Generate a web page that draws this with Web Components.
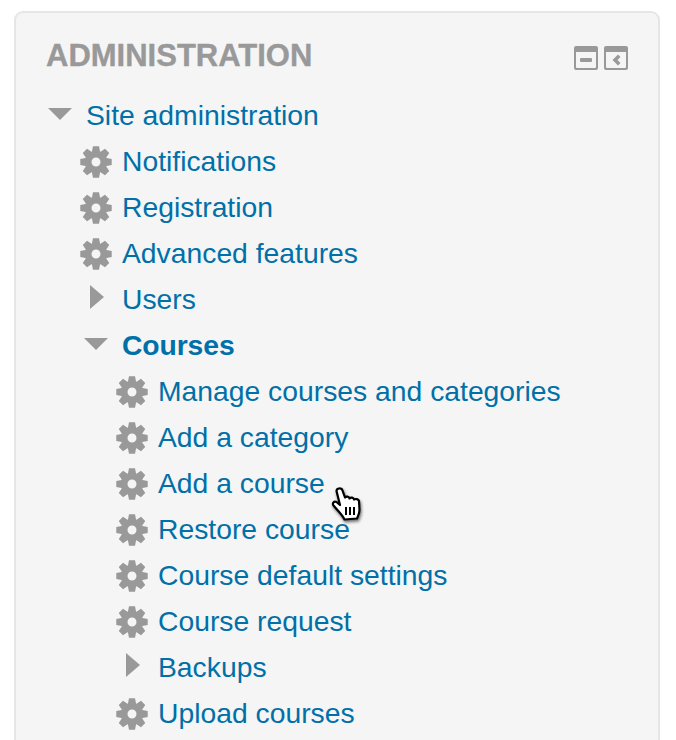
<!DOCTYPE html>
<html>
<head>
<meta charset="utf-8">
<style>
html,body{margin:0;padding:0;background:#fff;height:740px;overflow:hidden}
body{font-family:"Liberation Sans",Arial,sans-serif;position:relative}
</style>
</head>
<body>
<x-page>
  <x-block heading="ADMINISTRATION">
    <x-node kind="open" label="Site administration">
      <x-node kind="gear" label="Notifications"></x-node>
      <x-node kind="gear" label="Registration"></x-node>
      <x-node kind="gear" label="Advanced features"></x-node>
      <x-node kind="closed" label="Users"></x-node>
      <x-node kind="open" label="Courses" bold>
        <x-node kind="gear" label="Manage courses and categories"></x-node>
        <x-node kind="gear" label="Add a category"></x-node>
        <x-node kind="gear" label="Add a course"></x-node>
        <x-node kind="gear" label="Restore course"></x-node>
        <x-node kind="gear" label="Course default settings"></x-node>
        <x-node kind="gear" label="Course request"></x-node>
        <x-node kind="closed" label="Backups"></x-node>
        <x-node kind="gear" label="Upload courses"></x-node>
      </x-node>
    </x-node>
  </x-block>
  <x-pointer></x-pointer>
</x-page>
<script>
function gearPath(){
  var cx=16,cy=16,teeth=8,d='';
  var pts=[];
  for(var i=0;i<teeth;i++){
    var a=i*Math.PI*2/teeth-Math.PI/2;
    var w=0.27, W=0.19;
    pts.push([11.2,a-w-0.1],[16,a-W],[16,a+W],[11.2,a+w+0.1]);
  }
  pts.forEach(function(p,i){
    d+=(i?'L':'M')+(cx+p[0]*Math.cos(p[1])).toFixed(2)+' '+(cy+p[0]*Math.sin(p[1])).toFixed(2);
  });
  d+='Z M20.500 16a4.500 4.500 0 1 0-9 0a4.500 4.500 0 1 0 9 0Z';
  return d;
}
var ICONS={
  gear:'<svg width="32" height="32" viewBox="0 0 32 32"><path fill="#999" fill-rule="evenodd" d="'+gearPath()+'"/></svg>',
  open:'<svg width="24" height="12" viewBox="0 0 24 12"><path fill="#999" d="M0 0H24L12 12Z"/></svg>',
  closed:'<svg width="14" height="24" viewBox="0 0 14 24"><path fill="#999" d="M0 0L14 12L0 24Z"/></svg>'
};

class XPage extends HTMLElement{
  constructor(){super();this.attachShadow({mode:'open'}).innerHTML=
  '<style>:host{display:block;position:relative;height:740px;overflow:hidden;padding:11px 16px 0 14px;box-sizing:border-box}</style><slot></slot>';}
}
class XBlock extends HTMLElement{
  constructor(){super();this.attachShadow({mode:'open'}).innerHTML=`
  <style>
  :host{display:block;background:#f5f5f5;border:2px solid #e6e6e6;border-radius:9px;box-sizing:border-box;padding:20px 30px 0 30px;min-height:900px}
  header{display:flex;align-items:center;justify-content:space-between;height:44px;margin-bottom:15px}
  h2{margin:2px 0 0;font:bold 31px/44px "Liberation Sans",Arial,sans-serif;color:#999;-webkit-text-stroke:.35px #999}
  .controls{display:flex;gap:6px;margin-top:6px}
  svg{display:block}
  </style>
  <header><h2></h2><div class="controls">
    <svg width="24" height="24" viewBox="0 0 24 24"><path fill="#999" fill-rule="evenodd" d="M2 0H22a2 2 0 0 1 2 2V22a2 2 0 0 1-2 2H2a2 2 0 0 1-2-2V2a2 2 0 0 1 2-2ZM2 6V21a1 1 0 0 0 1 1H21a1 1 0 0 0 1-1V6Z"/><rect x="6" y="12" width="12" height="4" rx="1" fill="#999"/></svg>
    <svg width="24" height="24" viewBox="0 0 24 24"><path fill="#999" fill-rule="evenodd" d="M2 0H22a2 2 0 0 1 2 2V22a2 2 0 0 1-2 2H2a2 2 0 0 1-2-2V2a2 2 0 0 1 2-2ZM2 6V21a1 1 0 0 0 1 1H21a1 1 0 0 0 1-1V6Z"/><path fill="#999" d="M14 8.500l2.500 2.500-3 3 3 3-2.500 2.500-5.500-5.500Z"/></svg>
  </div></header>
  <slot></slot>`;
  this.shadowRoot.querySelector('h2').textContent=this.getAttribute('heading');}
}
class XNode extends HTMLElement{
  constructor(){super();this.attachShadow({mode:'open'}).innerHTML=`
  <style>
  :host{display:block}
  .row{display:flex;align-items:center;height:46px;gap:12px}
  .ic{width:28px;height:46px;display:flex;align-items:center;justify-content:center;flex:none}
  .ic svg{display:block;flex:none}
  :host([kind=closed]) .ic svg{margin-left:2px;margin-top:-4px}
  :host([kind=open]) .ic svg{margin-top:-2px}
  :host([kind=gear]) .ic svg{margin-top:1px}
  a{font:28.3px/48px "Liberation Sans",Arial,sans-serif;color:#0070a8;text-decoration:none;white-space:nowrap}
  :host([bold]) > .row a{font-weight:bold;letter-spacing:-.1px}
  .kids{padding-left:36px}
  </style>
  <div class="row"><span class="ic"></span><a href="#"></a></div>
  <div class="kids"><slot></slot></div>`;
  this.shadowRoot.querySelector('a').textContent=this.getAttribute('label');
  this.shadowRoot.querySelector('.ic').innerHTML=ICONS[this.getAttribute('kind')];}
}
class XPointer extends HTMLElement{
  constructor(){super();this.attachShadow({mode:'open'}).innerHTML=`
  <style>:host{position:absolute;left:331px;top:484px;width:34px;height:40px;display:block}svg{display:block;overflow:visible;filter:drop-shadow(1px 2px 1.500px rgba(0,0,0,.55))}</style>
  <svg width="34" height="40" viewBox="0 0 34 40">
    <path fill="#fff" stroke="#000" stroke-width="2.200" stroke-linejoin="round" d="M5.500 7C5.500 4 10.500 3.500 11.500 6.500L14 13.500C15.500 12 18 12.500 18.500 14.500C20 13 22.500 13.500 23 15.500C24.500 14.500 27.500 15 28 17L28.500 26C28.500 30 27 32 26 34.500L13.500 35.500C11.500 31 7 27 2.500 21.500C1 19.500 3 16.500 5.500 18L9 21Z"/>
    <path stroke="#000" stroke-width="2" fill="none" d="M15 23V31M19 23V31M23 23V31"/>
  </svg>`;}
}
customElements.define('x-page',XPage);
customElements.define('x-block',XBlock);
customElements.define('x-node',XNode);
customElements.define('x-pointer',XPointer);
</script>
</body>
</html>
